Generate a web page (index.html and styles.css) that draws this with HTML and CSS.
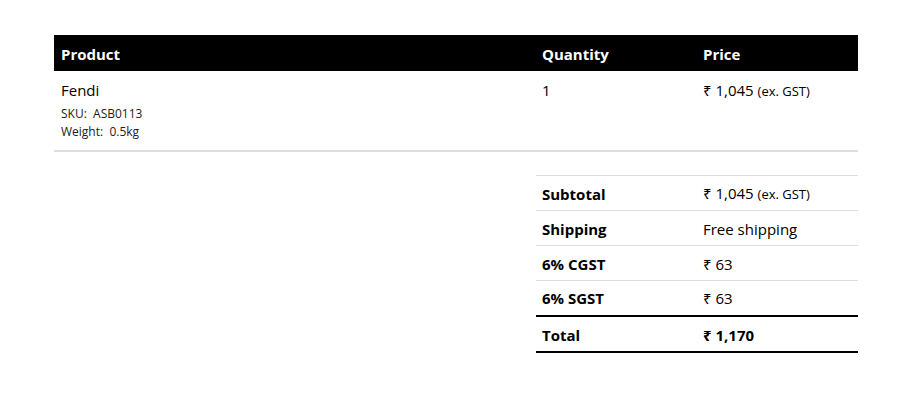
FILE: index.html
```html
<!DOCTYPE html>
<html>
<head>
<meta charset="utf-8">
<link rel="stylesheet" href="styles.css">
</head>
<body>
<div class="wrap">
  <table class="items">
    <colgroup><col class="c-prod"><col class="c-qty"><col class="c-price"></colgroup>
    <thead>
      <tr><th>Product</th><th>Quantity</th><th>Price</th></tr>
    </thead>
    <tbody>
      <tr>
        <td>
          <div class="name">Fendi</div>
          <div class="meta">SKU:&nbsp; ASB0113</div>
          <div class="meta">Weight:&nbsp; 0.5kg</div>
        </td>
        <td>1</td>
        <td>₹ 1,045 <small>(ex. GST)</small></td>
      </tr>
    </tbody>
  </table>
  <div class="totals-row">
    <table class="totals">
      <tr><th>Subtotal</th><td>₹ 1,045 <small>(ex. GST)</small></td></tr>
      <tr><th>Shipping</th><td>Free shipping</td></tr>
      <tr><th>6% CGST</th><td>₹ 63</td></tr>
      <tr><th>6% SGST</th><td>₹ 63</td></tr>
      <tr class="total"><th>Total</th><td><b>₹ 1,170</b></td></tr>
    </table>
  </div>
</div>
</body>
</html>
```
FILE: styles.css
```css
html, body { margin: 0; padding: 0; background: #fff; }
body {
  font-family: "Open Sans", "Noto Sans", sans-serif;
  color: #000;
  font-size: 15px;
}
.wrap {
  width: 804px;
  margin-left: 54px;
  padding-top: 35px;
}
table { border-collapse: collapse; }
.items { width: 804px; table-layout: fixed; }
.c-prod { width: 482px; }
.c-qty { width: 161px; }
.c-price { width: 161px; }
.items th {
  background: #000;
  color: #fff;
  font-weight: 700;
  text-align: left;
  font-size: 15px;
  line-height: 20px;
  height: 36px;
  padding: 2px 6px 0;
  box-sizing: border-box;
}
.items td {
  vertical-align: top;
  padding: 9px 6px 9px 6px;
  border-bottom: 2px solid #ddd;
  line-height: 20px;
}
.items th:first-child, .items td:first-child { padding-left: 7px; }
.name { margin-bottom: 5px; }
.meta { font-size: 12px; line-height: 18px; color: #222; }
small { font-size: 13px; }
.totals-row {
  display: flex;
  justify-content: flex-end;
  padding-top: 23px;
}
.totals { width: 322px; table-layout: fixed; border-top: 1px solid #ddd; }
.totals th, .totals td {
  width: 50%;
  text-align: left;
  height: 35px;
  padding: 1px 6px 0;
  line-height: 20px;
  box-sizing: border-box;
  border-bottom: 1px solid #ddd;
  vertical-align: middle;
}
.totals th { font-weight: 700; }
.totals tr:nth-child(4) th, .totals tr:nth-child(4) td { border-bottom: 2px solid #000; }
.totals tr.total th, .totals tr.total td { border-bottom: 2px solid #000; height: 36px; padding-top: 2px; }
```
